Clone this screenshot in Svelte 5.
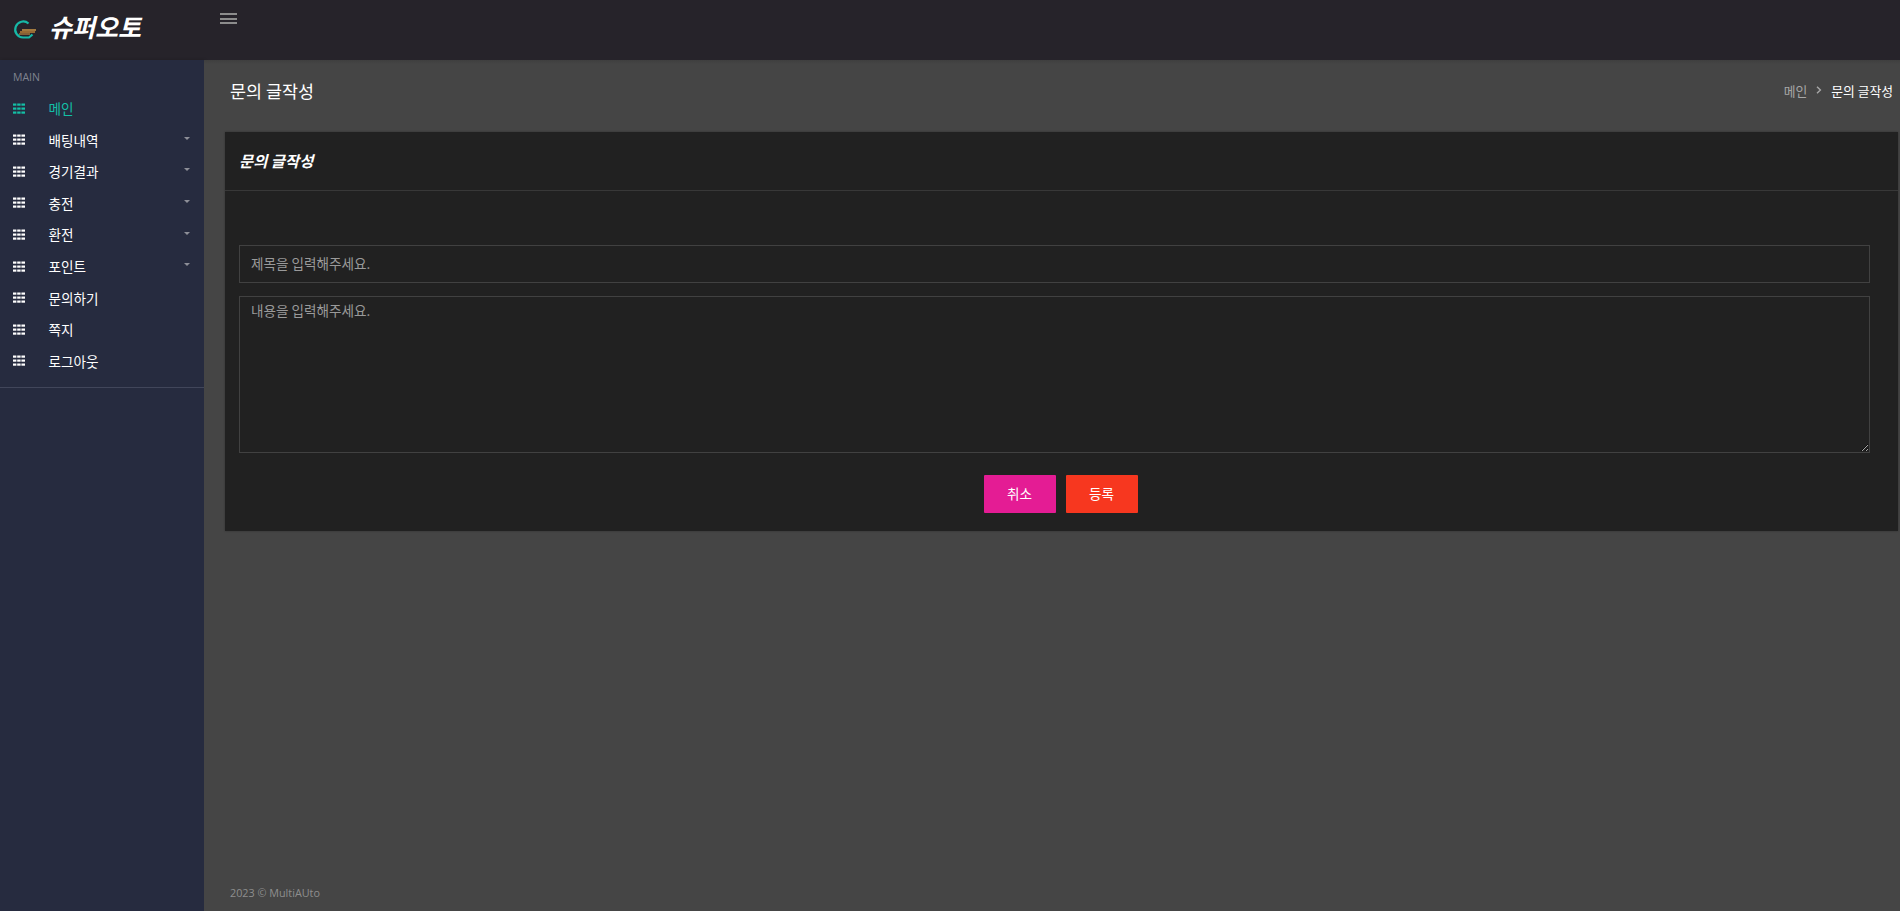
<script>
	const menu = [
		{ label: '메인', active: true },
		{ label: '배팅내역', caret: true },
		{ label: '경기결과', caret: true },
		{ label: '충전', caret: true },
		{ label: '환전', caret: true },
		{ label: '포인트', caret: true },
		{ label: '문의하기' },
		{ label: '쪽지' },
		{ label: '로그아웃' }
	];
</script>

<div class="layout">
	<header class="topbar">
		<div class="brand">
			<svg class="logo" width="30" height="24" viewBox="0 0 30 24">
				<path d="M20.5 5.5A8 8 0 1 0 15 19.5H21L24.5 16.5" fill="none" stroke="#17b8a6" stroke-width="2.2" />
				<path d="M14 12h14" stroke="#d9a04a" stroke-width="1.4" fill="none" />
				<path d="M12 14h15" stroke="#c98a3a" stroke-width="1.4" fill="none" />
				<path d="M11 16h11" stroke="#b98340" stroke-width="1.3" fill="none" />
			</svg>
			<span class="brand-name">슈퍼오토</span>
		</div>
		<button class="burger" aria-label="메뉴">
			<span></span><span></span><span></span>
		</button>
	</header>

	<div class="body">
		<nav class="sidebar">
			<div class="menu-title">MAIN</div>
			<ul>
				{#each menu as item}
					<li class:active={item.active}>
						<svg class="grid-icon" width="12" height="11" viewBox="0 0 12 11">
							{#each [0.5, 4.5, 8.5] as y}
								<rect x="0" {y} width="3.4" height="2.2" />
								<rect x="4.2" {y} width="3.4" height="2.2" />
								<rect x="8.4" {y} width="3.6" height="2.2" />
							{/each}
						</svg>
						<span>{item.label}</span>
						{#if item.caret}<i class="caret"></i>{/if}
					</li>
				{/each}
			</ul>
		</nav>

		<main class="content">
			<div class="page-head">
				<h1>문의 글작성</h1>
				<ol class="crumbs">
					<li class="muted">메인</li>
					<li class="sep">
						<svg width="6" height="8" viewBox="0 0 6 8"><path d="M1 .8 4.4 4 1 7.2" fill="none" stroke="#a8a8a8" stroke-width="1.4" /></svg>
					</li>
					<li>문의 글작성</li>
				</ol>
			</div>

			<section class="card">
				<div class="card-head"><h2>문의 글작성</h2></div>
				<form class="card-body" onsubmit={(e) => e.preventDefault()}>
					<input type="text" placeholder="제목을 입력해주세요." />
					<textarea placeholder="내용을 입력해주세요."></textarea>
					<div class="actions">
						<button type="button" class="btn cancel">취소</button>
						<button type="submit" class="btn save">등록</button>
					</div>
				</form>
			</section>

			<footer>2023 © MultiAUto</footer>
		</main>
	</div>
</div>

<style>
	:global(body) {
		margin: 0;
		background: #454545;
		font-family: "Open Sans", "Noto Sans CJK KR", sans-serif;
		font-size: 13.6px;
		overflow: hidden;
	}

	.layout {
		display: flex;
		flex-direction: column;
		height: 911px;
	}

	.topbar {
		display: flex;
		flex: 0 0 60px;
		background: #26232a;
	}

	.brand {
		display: flex;
		align-items: flex-start;
		width: 204px;
		box-sizing: border-box;
		padding: 10px 0 0 8px;
	}

	.logo {
		margin-top: 8px;
	}

	.brand-name {
		margin-left: 11px;
		color: #fff;
		font-size: 25px;
		font-weight: 700;
		font-style: italic;
		line-height: 33px;
		font-family: "Noto Sans CJK KR", sans-serif;
	}

	.burger {
		display: flex;
		flex-direction: column;
		gap: 2.6px;
		height: fit-content;
		margin: 13px 0 0 16px;
		padding: 0;
		border: 0;
		background: none;
	}

	.burger span {
		display: block;
		width: 17px;
		height: 2px;
		background: #8c8c8c;
	}

	.body {
		display: flex;
		flex: 1;
		min-height: 0;
	}

	.sidebar {
		flex: 0 0 204px;
		background: #262b3f;
		box-shadow: 1px 0 3px rgba(0, 0, 0, 0.2);
	}

	.menu-title {
		padding: 10px 0 0 13px;
		color: #80848f;
		font-size: 10.5px;
		line-height: 15px;
	}

	ul {
		margin: 0;
		padding: 7.3px 0 0;
		list-style: none;
		border-bottom: 1px solid #41465a;
		height: 294.7px;
		box-sizing: content-box;
	}

	.sidebar li {
		position: relative;
		display: flex;
		align-items: center;
		height: 31.6px;
		padding-left: 13px;
		color: #fff;
		font-family: "Noto Sans CJK KR", sans-serif;
	}

	.sidebar li.active {
		color: #13bfa6;
	}

	.grid-icon {
		margin-right: 23.5px;
		fill: currentColor;
	}

	.caret {
		position: absolute;
		top: 13px;
		left: 184px;
		border-top: 3px solid #8d8f98;
		border-left: 3px solid transparent;
		border-right: 3px solid transparent;
	}

	.content {
		position: relative;
		flex: 1;
		min-width: 0;
		padding: 0 2px 0 21px;
		background: linear-gradient(#3f3f3f, #454545 4px);
	}

	.page-head {
		display: flex;
		align-items: center;
		justify-content: space-between;
		height: 72px;
		box-sizing: border-box;
		padding: 0 5px 12px 5px;
	}

	h1 {
		margin: 0;
		color: #fff;
		font-size: 17.4px;
		font-weight: 400;
		font-family: "Noto Sans CJK KR", sans-serif;
	}

	.crumbs {
		display: flex;
		align-items: center;
		gap: 9px;
		margin: 0;
		padding: 0;
		color: #fff;
		font-size: 12.8px;
		list-style: none;
		font-family: "Noto Sans CJK KR", sans-serif;
	}

	.muted {
		color: #a8a8a8;
	}

	.sep {
		display: flex;
	}

	.card {
		height: 399px;
		box-sizing: border-box;
		background: #212121;
		box-shadow: 0 0 2px rgba(0, 0, 0, 0.3);
	}

	.card-head {
		display: flex;
		align-items: center;
		height: 59px;
		box-sizing: border-box;
		padding: 0 14px 3px;
		border-bottom: 1px solid #383838;
	}

	h2 {
		margin: 0;
		color: #fff;
		font-size: 15.4px;
		font-weight: 700;
		font-style: italic;
		font-family: "Noto Sans CJK KR", sans-serif;
	}

	.card-body {
		display: flex;
		flex-direction: column;
		padding: 54px 28px 0 14px;
	}

	input,
	textarea {
		display: block;
		box-sizing: border-box;
		width: 100%;
		background: #212121;
		border: 1px solid #414141;
		color: #ddd;
		font: inherit;
		font-family: "Noto Sans CJK KR", sans-serif;
		outline: none;
		border-radius: 0;
	}

	input {
		height: 38px;
		padding: 0 11px 3px;
	}

	textarea {
		height: 157px;
		margin-top: 13px;
		padding: 3px 11px;
	}

	input::placeholder,
	textarea::placeholder {
		color: #9a9a9a;
		opacity: 1;
	}

	.actions {
		display: flex;
		justify-content: center;
		gap: 10px;
		margin-top: 22px;
		padding-left: 12px;
	}

	.btn {
		width: 72px;
		height: 38px;
		padding: 0 0 2px;
		border: 0;
		border-radius: 1px;
		color: #fff;
		font: inherit;
		font-family: "Noto Sans CJK KR", sans-serif;
	}

	.cancel {
		background: #e41c94;
	}

	.save {
		background: #f7371f;
	}

	footer {
		position: absolute;
		left: 26px;
		bottom: 10px;
		color: #8e8e8e;
		font-size: 10.8px;
		line-height: 16px;
	}
</style>
